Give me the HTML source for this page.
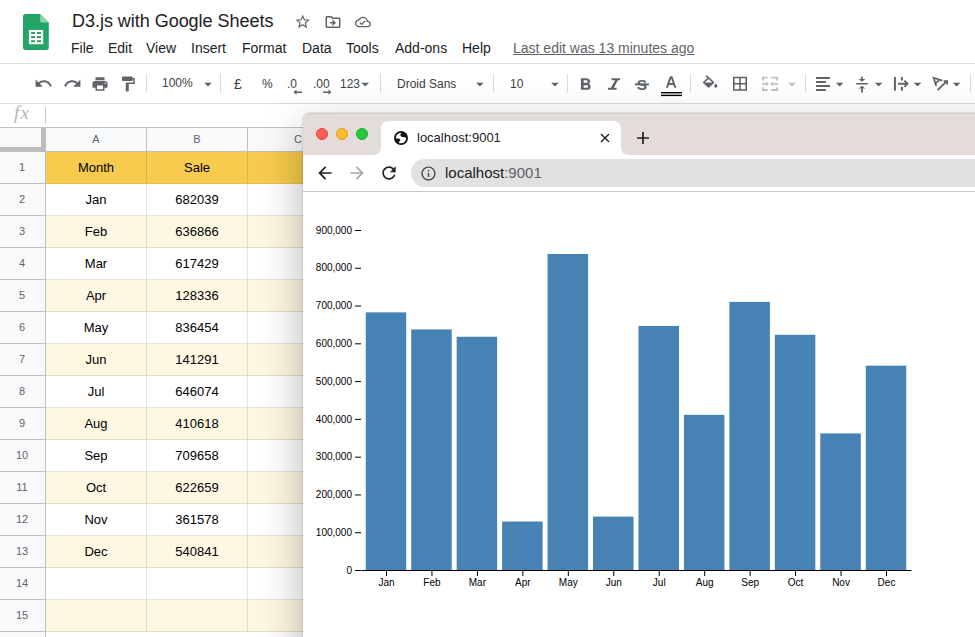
<!DOCTYPE html>
<html><head><meta charset="utf-8">
<style>
*{margin:0;padding:0;box-sizing:border-box}
html,body{width:975px;height:637px;overflow:hidden;background:#fff;font-family:"Liberation Sans",sans-serif;position:relative}
.a{position:absolute}
.t{position:absolute;white-space:nowrap}
#title{left:72px;top:11px;font-size:18px;color:#202124;letter-spacing:-0.03px}
.menu{top:40px;font-size:14px;color:#202124}
.ic{position:absolute;fill:#5f6368}
.sep{position:absolute;top:74px;width:1px;height:19px;background:#dadce0}
.tb{position:absolute;font-size:12px;color:#3c4043}
.arr{position:absolute;width:0;height:0;border-left:3.5px solid transparent;border-right:3.5px solid transparent;border-top:3.5px solid #5f6368}
#grid{position:absolute;left:0;top:127px;width:975px;height:510px}
.rh{position:absolute;left:0;width:45px;background:#f8f9fa;border-bottom:1px solid #c0c0c0;border-right:1px solid #c0c0c0;color:#5f6368;font-size:11px;text-align:center}
.cell{position:absolute;border-bottom:1px solid #e2e2e2;border-right:1px solid #e2e2e2;font-size:13px;color:#000;text-align:center}
</style></head><body>
<!-- Sheets logo -->
<svg class="a" style="left:0;top:0" width="60" height="60" viewBox="0 0 60 60">
<path d="M25.5 14H40.2L48.8 22.6V47.5A2.5 2.5 0 0 1 46.3 50H25.5A2.5 2.5 0 0 1 23 47.5V16.5A2.5 2.5 0 0 1 25.5 14Z" fill="#22a565"/>
<path d="M40.2 14L48.8 22.6H42.2A2 2 0 0 1 40.2 20.6Z" fill="#8ed1b1"/>
<rect x="28.9" y="29.9" width="14.3" height="14.3" fill="#fff"/>
<g fill="#1c9458"><rect x="31.1" y="32.1" width="3.8" height="1.8"/><rect x="37" y="32.1" width="4" height="1.8"/><rect x="31.1" y="36.2" width="3.8" height="1.8"/><rect x="37" y="36.2" width="4" height="1.8"/><rect x="31.1" y="40.3" width="3.8" height="1.8"/><rect x="37" y="40.3" width="4" height="1.8"/></g>
</svg>
<div id="title" class="t">D3.js with Google Sheets</div>
<!-- star -->
<svg class="ic" style="left:294.3px;top:13.4px" width="17.3" height="17.3" viewBox="0 0 24 24"><path d="M22 9.24l-7.19-.62L12 2 9.19 8.63 2 9.24l5.46 4.73L5.82 21 12 17.27 18.18 21l-1.63-7.03L22 9.24zM12 15.4l-3.76 2.27 1-4.28-3.32-2.88 4.38-.38L12 6.1l1.71 4.04 4.38.38-3.32 2.88 1 4.28L12 15.4z"/></svg>
<!-- folder move -->
<svg class="ic" style="left:323.5px;top:13px" width="18" height="18" viewBox="0 0 24 24"><path d="M20 6h-8l-2-2H4c-1.11 0-1.99.89-1.99 2L2 18c0 1.11.89 2 2 2h16c1.11 0 2-.89 2-2V8c0-1.11-.89-2-2-2zm0 12H4V6h5.17l2 2H20v10zm-7.84-6H8v2h4.16l-1.59 1.59L11.99 17 16 13.01 11.99 9l-1.41 1.41L12.16 12z"/></svg>
<!-- cloud done -->
<svg class="ic" style="left:355px;top:14.3px" width="16" height="16" viewBox="0 0 24 24"><path d="M19.35 10.04C18.67 6.59 15.64 4 12 4 9.11 4 6.6 5.64 5.35 8.04 2.34 8.36 0 10.91 0 14c0 3.31 2.69 6 6 6h13c2.76 0 5-2.24 5-5 0-2.64-2.05-4.78-4.65-4.96zM19 18H6c-2.21 0-4-1.79-4-4 0-2.05 1.53-3.76 3.56-3.97l1.07-.11.5-.95C8.08 7.14 9.94 6 12 6c2.62 0 4.88 1.86 5.39 4.43l.3 1.5 1.53.11c1.56.1 2.78 1.41 2.78 2.96 0 1.65-1.35 3-3 3zm-9-3.82l-2.09-2.09L6.5 13.5 10 17l6.01-6.01-1.41-1.41z"/></svg>

<div class="t menu" style="left:71px">File</div>
<div class="t menu" style="left:108px">Edit</div>
<div class="t menu" style="left:146px">View</div>
<div class="t menu" style="left:191px">Insert</div>
<div class="t menu" style="left:242px">Format</div>
<div class="t menu" style="left:302px">Data</div>
<div class="t menu" style="left:346px">Tools</div>
<div class="t menu" style="left:395px">Add-ons</div>
<div class="t menu" style="left:462px">Help</div>
<div class="t menu" style="left:513px;color:#5f6368;text-decoration:underline">Last edit was 13 minutes ago</div>

<!-- toolbar -->
<div class="a" style="left:0;top:63px;width:975px;height:1px;background:#dadce0"></div>
<div class="a" style="left:0;top:103px;width:975px;height:1px;background:#dadce0"></div>

<svg class="ic" style="left:34px;top:74px" width="19" height="19" viewBox="0 0 24 24"><path d="M12.5 8c-2.65 0-5.05.99-6.9 2.6L2 7v9h9l-3.62-3.62c1.39-1.16 3.16-1.88 5.12-1.880 3.54 0 6.55 2.31 7.6 5.5l2.37-.78C21.08 11.03 17.15 8 12.5 8z"/></svg>
<svg class="ic" style="left:63px;top:74px" width="19" height="19" viewBox="0 0 24 24"><path d="M18.4 10.6C16.55 8.99 14.15 8 11.5 8c-4.65 0-8.58 3.03-9.960 7.22L3.9 16c1.05-3.19 4.05-5.5 7.6-5.5 1.95 0 3.73.72 5.12 1.88L13 16h9V7l-3.6 3.6z"/></svg>
<svg class="ic" style="left:91px;top:75px" width="18" height="18" viewBox="0 0 24 24"><path d="M19 8H5c-1.66 0-3 1.34-3 3v6h4v4h12v-4h4v-6c0-1.66-1.34-3-3-3zm-3 11H8v-5h8v5zm3-7c-.55 0-1-.45-1-1s.45-1 1-1 1 .45 1 1-.45 1-1 1zm-1-9H6v4h12V3z"/></svg>
<svg class="ic" style="left:119px;top:75px" width="18" height="18" viewBox="0 0 24 24"><path d="M18 4V3c0-.55-.45-1-1-1H5c-.55 0-1 .45-1 1v4c0 .55.45 1 1 1h12c.55 0 1-.45 1-1V6h1v4H9v11c0 .55.45 1 1 1h2c.55 0 1-.45 1-1v-9h8V4h-3z"/></svg>
<div class="sep" style="left:146px"></div>
<div class="tb t" style="left:162px;top:76px">100%</div>
<div class="sep" style="left:220px"></div>
<div class="tb t" style="left:234px;top:76px;font-size:14px">£</div>
<div class="tb t" style="left:262px;top:77px">%</div>
<div class="tb t" style="left:287px;top:77px">.0</div>
<div class="tb t" style="left:313px;top:77px">.00</div>
<div class="tb t" style="left:340px;top:77px">123</div>
<div class="sep" style="left:380px"></div>
<div class="tb t" style="left:397px;top:77px">Droid Sans</div>
<div class="sep" style="left:493px"></div>
<div class="tb t" style="left:510px;top:77px">10</div>
<div class="sep" style="left:567px"></div>
<div class="sep" style="left:690px"></div>
<div class="sep" style="left:805px"></div>
<!--TBSVG--><svg class="a" style="left:0;top:0" width="975" height="110" viewBox="0 0 975 110"><path d="M204.2 82.8h7.6l-3.8 3.8z" fill="#5f6368"/><path d="M361.4 82.8h7.6l-3.8 3.8z" fill="#5f6368"/><path d="M476.09999999999997 82.8h7.6l-3.8 3.8z" fill="#5f6368"/><path d="M551.1 82.8h7.6l-3.8 3.8z" fill="#5f6368"/><path d="M835.9000000000001 82.8h7.6l-3.8 3.8z" fill="#5f6368"/><path d="M874.9000000000001 82.8h7.6l-3.8 3.8z" fill="#5f6368"/><path d="M913.7 82.8h7.6l-3.8 3.8z" fill="#5f6368"/><path d="M952.8000000000001 82.8h7.6l-3.8 3.8z" fill="#5f6368"/><path d="M788.2 82.8h7.6l-3.8 3.8z" fill="#bdc1c6"/><path d="M293.5 92.2l3-2.6v1.8h5.5v1.6h-5.5v1.8z" fill="#5f6368"/><path d="M331.5 92.2l-3-2.6v1.8h-5.5v1.6h5.5v1.8z" fill="#5f6368"/><g transform="translate(574.6,74.9) scale(0.902,0.829)"><path fill="#5f6368" d="M15.6 10.79c.97-.67 1.65-1.77 1.65-2.79 0-2.260-1.75-4-4-4H7v14h7.04c2.09 0 3.71-1.7 3.71-3.79 0-1.52-.86-2.82-2.15-3.42zM10 6.5h3c.83 0 1.5.67 1.5 1.5s-.67 1.5-1.5 1.5h-3v-3zm3.5 9H10v-3h3.5c.83 0 1.5.67 1.5 1.5s-.67 1.5-1.5 1.5z"/></g><path fill="#5f6368" d="M611.6 78.2h8.5v2.1h-8.5zM608 87.7h8.6v2.1h-8.6zM615.1 80.3h2.8l-4.1 7.4h-2.9z"/><text x="641.9" y="89.8" font-family="Liberation Sans" font-weight="bold" font-size="15.5" text-anchor="middle" fill="#5f6368">S</text><rect x="634.8" y="83.4" width="14.1" height="1.9" fill="#5f6368"/><path fill="#5f6368" fill-rule="evenodd" d="M665.9 87.8L669.9 76.3h2.5L676.4 87.8h-2.1l-1-2.9h-4.3l-1 2.9zM669.6 83.1h3.1l-1.55-4.5z"/><rect x="661" y="92" width="21" height="1.4" fill="#000"/><rect x="661" y="94.7" width="21" height="1.4" fill="#000"/><g transform="translate(700.6,75.1) scale(0.8,0.74)"><path fill="#5f6368" d="M16.56 8.94L7.62 0 6.21 1.41l2.38 2.38-5.15 5.15c-.59.59-.59 1.54 0 2.12l5.5 5.5c.29.29.68.44 1.06.44s.77-.15 1.06-.44l5.5-5.5c.59-.58.59-1.53 0-2.12zM5.21 10L10 5.21 14.79 10H5.21zM19 11.5s-2 2.17-2 3.5c0 1.1.9 2 2 2s2-.9 2-2c0-1.33-2-3.5-2-3.5z"/></g><g transform="translate(730.67,74.37) scale(0.778)"><path fill="#5f6368" d="M3 3v18h18V3H3zm8 16H5v-6h6v6zm0-8H5V5h6v6zm8 8h-6v-6h6v6zm0-8h-6V5h6v6z"/></g><g stroke="#bdc1c6" stroke-width="1.8" fill="none"><path d="M762.9 80.6V77.6H767.6M771.2 77.6H777.1V80.6M762.9 87.2V90H767.6M771.2 90H777.1V87.2M762 83.8H767M777.9 83.8H772"/></g><path fill="#bdc1c6" d="M766.2 81.3l2.6 2.5-2.6 2.5zM772.8 81.3l-2.6 2.5 2.6 2.5z"/><path fill="#5f6368" d="M816.1 77.1h13.8v1.8h-13.8zM816.1 81.1h9.7v1.8h-9.7zM816.1 85.1h13.8v1.8h-13.8zM816.1 89.1h9.7v1.8h-9.7z"/><path fill="#5f6368" d="M856.2 82.9h11.6v1.6h-11.6zM861.1 76.7h1.8v2.6h-1.8zM858.6 79.1h6.8l-3.4 2.6zM858.6 88.4h6.8l-3.4-2.6zM861.1 88.2h1.8v4.3h-1.8z"/><path fill="#5f6368" d="M893.9 76.9h2v13.9h-2zM900.9 76.9h2v3.5h-2zM900.9 86.7h2v4.1h-2zM898.1 82.7h8v2h-8z"/><path d="M904.4 80.6l3.1 3.1-3.1 3.1" stroke="#5f6368" stroke-width="1.9" fill="none"/><path d="M942.3 80.6L933.6 77.8L936.3 86.0M939.6 79.7L934.6 84.2" stroke="#5f6368" stroke-width="1.7" fill="none" stroke-linejoin="miter"/><path d="M937.6 90.2L946.8 81.1M943.6 81.1H947.1V84.6" stroke="#5f6368" stroke-width="1.8" fill="none"/></svg><!--/TBSVG-->
<div class="sep" style="left:970px"></div>

<!-- formula bar -->
<div class="t" style="left:14px;top:101.5px;font-family:'Liberation Serif',serif;font-style:italic;font-size:19px;color:#b5b5b5;letter-spacing:1.2px">fx</div>
<div class="a" style="left:45px;top:107px;width:1px;height:17px;background:#c6c8cb"></div>

<!-- grid -->
<div class="a" style="left:0;top:127px;width:975px;height:1px;background:#c0c0c0"></div>
<!--GRID-->
<div class="a" style="left:0;top:128px;width:46px;height:24px;background:#f8f9fa"></div>
<div class="a" style="left:41px;top:128px;width:5px;height:24px;background:#bdbdbd"></div>
<div class="a" style="left:0;top:147px;width:46px;height:5px;background:#bdbdbd"></div>
<div class="a" style="left:46px;top:128px;width:101px;height:24px;background:#f8f9fa;border-right:1px solid #c0c0c0;border-bottom:1px solid #c0c0c0;color:#5f6368;font-size:11px;text-align:center;line-height:23px">A</div>
<div class="a" style="left:147px;top:128px;width:101px;height:24px;background:#f8f9fa;border-right:1px solid #c0c0c0;border-bottom:1px solid #c0c0c0;color:#5f6368;font-size:11px;text-align:center;line-height:23px">B</div>
<div class="a" style="left:248px;top:128px;width:101px;height:24px;background:#f8f9fa;border-right:1px solid #c0c0c0;border-bottom:1px solid #c0c0c0;color:#5f6368;font-size:11px;text-align:center;line-height:23px">C</div>
<div class="a" style="left:349px;top:128px;width:101px;height:24px;background:#f8f9fa;border-right:1px solid #c0c0c0;border-bottom:1px solid #c0c0c0;color:#5f6368;font-size:11px;text-align:center;line-height:23px">D</div>
<div class="a" style="left:0;top:152px;width:46px;height:32px;background:#f8f9fa;border-right:1px solid #c0c0c0;border-bottom:1px solid #c0c0c0;color:#5f6368;font-size:11px;text-align:center;line-height:31px;padding-right:1px">1</div>
<div class="a" style="left:46px;top:152px;width:101px;height:32px;background:#f7cb4d;border-right:1px solid rgba(0,0,0,0.11);border-bottom:1px solid rgba(0,0,0,0.05);color:#000;font-size:13px;text-align:center;line-height:31px">Month</div>
<div class="a" style="left:147px;top:152px;width:101px;height:32px;background:#f7cb4d;border-right:1px solid rgba(0,0,0,0.11);border-bottom:1px solid rgba(0,0,0,0.05);color:#000;font-size:13px;text-align:center;line-height:31px">Sale</div>
<div class="a" style="left:248px;top:152px;width:101px;height:32px;background:#f7cb4d;border-right:1px solid rgba(0,0,0,0.11);border-bottom:1px solid rgba(0,0,0,0.05);color:#000;font-size:13px;text-align:center;line-height:31px"></div>
<div class="a" style="left:349px;top:152px;width:101px;height:32px;background:#f7cb4d;border-right:1px solid rgba(0,0,0,0.11);border-bottom:1px solid rgba(0,0,0,0.05);color:#000;font-size:13px;text-align:center;line-height:31px"></div>
<div class="a" style="left:0;top:184px;width:46px;height:32px;background:#f8f9fa;border-right:1px solid #c0c0c0;border-bottom:1px solid #c0c0c0;color:#5f6368;font-size:11px;text-align:center;line-height:31px;padding-right:1px">2</div>
<div class="a" style="left:46px;top:184px;width:101px;height:32px;background:#ffffff;border-right:1px solid rgba(0,0,0,0.11);border-bottom:1px solid rgba(0,0,0,0.11);color:#000;font-size:13px;text-align:center;line-height:31px">Jan</div>
<div class="a" style="left:147px;top:184px;width:101px;height:32px;background:#ffffff;border-right:1px solid rgba(0,0,0,0.11);border-bottom:1px solid rgba(0,0,0,0.11);color:#000;font-size:13px;text-align:center;line-height:31px">682039</div>
<div class="a" style="left:248px;top:184px;width:101px;height:32px;background:#ffffff;border-right:1px solid rgba(0,0,0,0.11);border-bottom:1px solid rgba(0,0,0,0.11);color:#000;font-size:13px;text-align:center;line-height:31px"></div>
<div class="a" style="left:349px;top:184px;width:101px;height:32px;background:#ffffff;border-right:1px solid rgba(0,0,0,0.11);border-bottom:1px solid rgba(0,0,0,0.11);color:#000;font-size:13px;text-align:center;line-height:31px"></div>
<div class="a" style="left:0;top:216px;width:46px;height:32px;background:#f8f9fa;border-right:1px solid #c0c0c0;border-bottom:1px solid #c0c0c0;color:#5f6368;font-size:11px;text-align:center;line-height:31px;padding-right:1px">3</div>
<div class="a" style="left:46px;top:216px;width:101px;height:32px;background:#fef8e3;border-right:1px solid rgba(0,0,0,0.11);border-bottom:1px solid rgba(0,0,0,0.11);color:#000;font-size:13px;text-align:center;line-height:31px">Feb</div>
<div class="a" style="left:147px;top:216px;width:101px;height:32px;background:#fef8e3;border-right:1px solid rgba(0,0,0,0.11);border-bottom:1px solid rgba(0,0,0,0.11);color:#000;font-size:13px;text-align:center;line-height:31px">636866</div>
<div class="a" style="left:248px;top:216px;width:101px;height:32px;background:#fef8e3;border-right:1px solid rgba(0,0,0,0.11);border-bottom:1px solid rgba(0,0,0,0.11);color:#000;font-size:13px;text-align:center;line-height:31px"></div>
<div class="a" style="left:349px;top:216px;width:101px;height:32px;background:#fef8e3;border-right:1px solid rgba(0,0,0,0.11);border-bottom:1px solid rgba(0,0,0,0.11);color:#000;font-size:13px;text-align:center;line-height:31px"></div>
<div class="a" style="left:0;top:248px;width:46px;height:32px;background:#f8f9fa;border-right:1px solid #c0c0c0;border-bottom:1px solid #c0c0c0;color:#5f6368;font-size:11px;text-align:center;line-height:31px;padding-right:1px">4</div>
<div class="a" style="left:46px;top:248px;width:101px;height:32px;background:#ffffff;border-right:1px solid rgba(0,0,0,0.11);border-bottom:1px solid rgba(0,0,0,0.11);color:#000;font-size:13px;text-align:center;line-height:31px">Mar</div>
<div class="a" style="left:147px;top:248px;width:101px;height:32px;background:#ffffff;border-right:1px solid rgba(0,0,0,0.11);border-bottom:1px solid rgba(0,0,0,0.11);color:#000;font-size:13px;text-align:center;line-height:31px">617429</div>
<div class="a" style="left:248px;top:248px;width:101px;height:32px;background:#ffffff;border-right:1px solid rgba(0,0,0,0.11);border-bottom:1px solid rgba(0,0,0,0.11);color:#000;font-size:13px;text-align:center;line-height:31px"></div>
<div class="a" style="left:349px;top:248px;width:101px;height:32px;background:#ffffff;border-right:1px solid rgba(0,0,0,0.11);border-bottom:1px solid rgba(0,0,0,0.11);color:#000;font-size:13px;text-align:center;line-height:31px"></div>
<div class="a" style="left:0;top:280px;width:46px;height:32px;background:#f8f9fa;border-right:1px solid #c0c0c0;border-bottom:1px solid #c0c0c0;color:#5f6368;font-size:11px;text-align:center;line-height:31px;padding-right:1px">5</div>
<div class="a" style="left:46px;top:280px;width:101px;height:32px;background:#fef8e3;border-right:1px solid rgba(0,0,0,0.11);border-bottom:1px solid rgba(0,0,0,0.11);color:#000;font-size:13px;text-align:center;line-height:31px">Apr</div>
<div class="a" style="left:147px;top:280px;width:101px;height:32px;background:#fef8e3;border-right:1px solid rgba(0,0,0,0.11);border-bottom:1px solid rgba(0,0,0,0.11);color:#000;font-size:13px;text-align:center;line-height:31px">128336</div>
<div class="a" style="left:248px;top:280px;width:101px;height:32px;background:#fef8e3;border-right:1px solid rgba(0,0,0,0.11);border-bottom:1px solid rgba(0,0,0,0.11);color:#000;font-size:13px;text-align:center;line-height:31px"></div>
<div class="a" style="left:349px;top:280px;width:101px;height:32px;background:#fef8e3;border-right:1px solid rgba(0,0,0,0.11);border-bottom:1px solid rgba(0,0,0,0.11);color:#000;font-size:13px;text-align:center;line-height:31px"></div>
<div class="a" style="left:0;top:312px;width:46px;height:32px;background:#f8f9fa;border-right:1px solid #c0c0c0;border-bottom:1px solid #c0c0c0;color:#5f6368;font-size:11px;text-align:center;line-height:31px;padding-right:1px">6</div>
<div class="a" style="left:46px;top:312px;width:101px;height:32px;background:#ffffff;border-right:1px solid rgba(0,0,0,0.11);border-bottom:1px solid rgba(0,0,0,0.11);color:#000;font-size:13px;text-align:center;line-height:31px">May</div>
<div class="a" style="left:147px;top:312px;width:101px;height:32px;background:#ffffff;border-right:1px solid rgba(0,0,0,0.11);border-bottom:1px solid rgba(0,0,0,0.11);color:#000;font-size:13px;text-align:center;line-height:31px">836454</div>
<div class="a" style="left:248px;top:312px;width:101px;height:32px;background:#ffffff;border-right:1px solid rgba(0,0,0,0.11);border-bottom:1px solid rgba(0,0,0,0.11);color:#000;font-size:13px;text-align:center;line-height:31px"></div>
<div class="a" style="left:349px;top:312px;width:101px;height:32px;background:#ffffff;border-right:1px solid rgba(0,0,0,0.11);border-bottom:1px solid rgba(0,0,0,0.11);color:#000;font-size:13px;text-align:center;line-height:31px"></div>
<div class="a" style="left:0;top:344px;width:46px;height:32px;background:#f8f9fa;border-right:1px solid #c0c0c0;border-bottom:1px solid #c0c0c0;color:#5f6368;font-size:11px;text-align:center;line-height:31px;padding-right:1px">7</div>
<div class="a" style="left:46px;top:344px;width:101px;height:32px;background:#fef8e3;border-right:1px solid rgba(0,0,0,0.11);border-bottom:1px solid rgba(0,0,0,0.11);color:#000;font-size:13px;text-align:center;line-height:31px">Jun</div>
<div class="a" style="left:147px;top:344px;width:101px;height:32px;background:#fef8e3;border-right:1px solid rgba(0,0,0,0.11);border-bottom:1px solid rgba(0,0,0,0.11);color:#000;font-size:13px;text-align:center;line-height:31px">141291</div>
<div class="a" style="left:248px;top:344px;width:101px;height:32px;background:#fef8e3;border-right:1px solid rgba(0,0,0,0.11);border-bottom:1px solid rgba(0,0,0,0.11);color:#000;font-size:13px;text-align:center;line-height:31px"></div>
<div class="a" style="left:349px;top:344px;width:101px;height:32px;background:#fef8e3;border-right:1px solid rgba(0,0,0,0.11);border-bottom:1px solid rgba(0,0,0,0.11);color:#000;font-size:13px;text-align:center;line-height:31px"></div>
<div class="a" style="left:0;top:376px;width:46px;height:32px;background:#f8f9fa;border-right:1px solid #c0c0c0;border-bottom:1px solid #c0c0c0;color:#5f6368;font-size:11px;text-align:center;line-height:31px;padding-right:1px">8</div>
<div class="a" style="left:46px;top:376px;width:101px;height:32px;background:#ffffff;border-right:1px solid rgba(0,0,0,0.11);border-bottom:1px solid rgba(0,0,0,0.11);color:#000;font-size:13px;text-align:center;line-height:31px">Jul</div>
<div class="a" style="left:147px;top:376px;width:101px;height:32px;background:#ffffff;border-right:1px solid rgba(0,0,0,0.11);border-bottom:1px solid rgba(0,0,0,0.11);color:#000;font-size:13px;text-align:center;line-height:31px">646074</div>
<div class="a" style="left:248px;top:376px;width:101px;height:32px;background:#ffffff;border-right:1px solid rgba(0,0,0,0.11);border-bottom:1px solid rgba(0,0,0,0.11);color:#000;font-size:13px;text-align:center;line-height:31px"></div>
<div class="a" style="left:349px;top:376px;width:101px;height:32px;background:#ffffff;border-right:1px solid rgba(0,0,0,0.11);border-bottom:1px solid rgba(0,0,0,0.11);color:#000;font-size:13px;text-align:center;line-height:31px"></div>
<div class="a" style="left:0;top:408px;width:46px;height:32px;background:#f8f9fa;border-right:1px solid #c0c0c0;border-bottom:1px solid #c0c0c0;color:#5f6368;font-size:11px;text-align:center;line-height:31px;padding-right:1px">9</div>
<div class="a" style="left:46px;top:408px;width:101px;height:32px;background:#fef8e3;border-right:1px solid rgba(0,0,0,0.11);border-bottom:1px solid rgba(0,0,0,0.11);color:#000;font-size:13px;text-align:center;line-height:31px">Aug</div>
<div class="a" style="left:147px;top:408px;width:101px;height:32px;background:#fef8e3;border-right:1px solid rgba(0,0,0,0.11);border-bottom:1px solid rgba(0,0,0,0.11);color:#000;font-size:13px;text-align:center;line-height:31px">410618</div>
<div class="a" style="left:248px;top:408px;width:101px;height:32px;background:#fef8e3;border-right:1px solid rgba(0,0,0,0.11);border-bottom:1px solid rgba(0,0,0,0.11);color:#000;font-size:13px;text-align:center;line-height:31px"></div>
<div class="a" style="left:349px;top:408px;width:101px;height:32px;background:#fef8e3;border-right:1px solid rgba(0,0,0,0.11);border-bottom:1px solid rgba(0,0,0,0.11);color:#000;font-size:13px;text-align:center;line-height:31px"></div>
<div class="a" style="left:0;top:440px;width:46px;height:32px;background:#f8f9fa;border-right:1px solid #c0c0c0;border-bottom:1px solid #c0c0c0;color:#5f6368;font-size:11px;text-align:center;line-height:31px;padding-right:1px">10</div>
<div class="a" style="left:46px;top:440px;width:101px;height:32px;background:#ffffff;border-right:1px solid rgba(0,0,0,0.11);border-bottom:1px solid rgba(0,0,0,0.11);color:#000;font-size:13px;text-align:center;line-height:31px">Sep</div>
<div class="a" style="left:147px;top:440px;width:101px;height:32px;background:#ffffff;border-right:1px solid rgba(0,0,0,0.11);border-bottom:1px solid rgba(0,0,0,0.11);color:#000;font-size:13px;text-align:center;line-height:31px">709658</div>
<div class="a" style="left:248px;top:440px;width:101px;height:32px;background:#ffffff;border-right:1px solid rgba(0,0,0,0.11);border-bottom:1px solid rgba(0,0,0,0.11);color:#000;font-size:13px;text-align:center;line-height:31px"></div>
<div class="a" style="left:349px;top:440px;width:101px;height:32px;background:#ffffff;border-right:1px solid rgba(0,0,0,0.11);border-bottom:1px solid rgba(0,0,0,0.11);color:#000;font-size:13px;text-align:center;line-height:31px"></div>
<div class="a" style="left:0;top:472px;width:46px;height:32px;background:#f8f9fa;border-right:1px solid #c0c0c0;border-bottom:1px solid #c0c0c0;color:#5f6368;font-size:11px;text-align:center;line-height:31px;padding-right:1px">11</div>
<div class="a" style="left:46px;top:472px;width:101px;height:32px;background:#fef8e3;border-right:1px solid rgba(0,0,0,0.11);border-bottom:1px solid rgba(0,0,0,0.11);color:#000;font-size:13px;text-align:center;line-height:31px">Oct</div>
<div class="a" style="left:147px;top:472px;width:101px;height:32px;background:#fef8e3;border-right:1px solid rgba(0,0,0,0.11);border-bottom:1px solid rgba(0,0,0,0.11);color:#000;font-size:13px;text-align:center;line-height:31px">622659</div>
<div class="a" style="left:248px;top:472px;width:101px;height:32px;background:#fef8e3;border-right:1px solid rgba(0,0,0,0.11);border-bottom:1px solid rgba(0,0,0,0.11);color:#000;font-size:13px;text-align:center;line-height:31px"></div>
<div class="a" style="left:349px;top:472px;width:101px;height:32px;background:#fef8e3;border-right:1px solid rgba(0,0,0,0.11);border-bottom:1px solid rgba(0,0,0,0.11);color:#000;font-size:13px;text-align:center;line-height:31px"></div>
<div class="a" style="left:0;top:504px;width:46px;height:32px;background:#f8f9fa;border-right:1px solid #c0c0c0;border-bottom:1px solid #c0c0c0;color:#5f6368;font-size:11px;text-align:center;line-height:31px;padding-right:1px">12</div>
<div class="a" style="left:46px;top:504px;width:101px;height:32px;background:#ffffff;border-right:1px solid rgba(0,0,0,0.11);border-bottom:1px solid rgba(0,0,0,0.11);color:#000;font-size:13px;text-align:center;line-height:31px">Nov</div>
<div class="a" style="left:147px;top:504px;width:101px;height:32px;background:#ffffff;border-right:1px solid rgba(0,0,0,0.11);border-bottom:1px solid rgba(0,0,0,0.11);color:#000;font-size:13px;text-align:center;line-height:31px">361578</div>
<div class="a" style="left:248px;top:504px;width:101px;height:32px;background:#ffffff;border-right:1px solid rgba(0,0,0,0.11);border-bottom:1px solid rgba(0,0,0,0.11);color:#000;font-size:13px;text-align:center;line-height:31px"></div>
<div class="a" style="left:349px;top:504px;width:101px;height:32px;background:#ffffff;border-right:1px solid rgba(0,0,0,0.11);border-bottom:1px solid rgba(0,0,0,0.11);color:#000;font-size:13px;text-align:center;line-height:31px"></div>
<div class="a" style="left:0;top:536px;width:46px;height:32px;background:#f8f9fa;border-right:1px solid #c0c0c0;border-bottom:1px solid #c0c0c0;color:#5f6368;font-size:11px;text-align:center;line-height:31px;padding-right:1px">13</div>
<div class="a" style="left:46px;top:536px;width:101px;height:32px;background:#fef8e3;border-right:1px solid rgba(0,0,0,0.11);border-bottom:1px solid rgba(0,0,0,0.11);color:#000;font-size:13px;text-align:center;line-height:31px">Dec</div>
<div class="a" style="left:147px;top:536px;width:101px;height:32px;background:#fef8e3;border-right:1px solid rgba(0,0,0,0.11);border-bottom:1px solid rgba(0,0,0,0.11);color:#000;font-size:13px;text-align:center;line-height:31px">540841</div>
<div class="a" style="left:248px;top:536px;width:101px;height:32px;background:#fef8e3;border-right:1px solid rgba(0,0,0,0.11);border-bottom:1px solid rgba(0,0,0,0.11);color:#000;font-size:13px;text-align:center;line-height:31px"></div>
<div class="a" style="left:349px;top:536px;width:101px;height:32px;background:#fef8e3;border-right:1px solid rgba(0,0,0,0.11);border-bottom:1px solid rgba(0,0,0,0.11);color:#000;font-size:13px;text-align:center;line-height:31px"></div>
<div class="a" style="left:0;top:568px;width:46px;height:32px;background:#f8f9fa;border-right:1px solid #c0c0c0;border-bottom:1px solid #c0c0c0;color:#5f6368;font-size:11px;text-align:center;line-height:31px;padding-right:1px">14</div>
<div class="a" style="left:46px;top:568px;width:101px;height:32px;background:#ffffff;border-right:1px solid rgba(0,0,0,0.11);border-bottom:1px solid rgba(0,0,0,0.11);color:#000;font-size:13px;text-align:center;line-height:31px"></div>
<div class="a" style="left:147px;top:568px;width:101px;height:32px;background:#ffffff;border-right:1px solid rgba(0,0,0,0.11);border-bottom:1px solid rgba(0,0,0,0.11);color:#000;font-size:13px;text-align:center;line-height:31px"></div>
<div class="a" style="left:248px;top:568px;width:101px;height:32px;background:#ffffff;border-right:1px solid rgba(0,0,0,0.11);border-bottom:1px solid rgba(0,0,0,0.11);color:#000;font-size:13px;text-align:center;line-height:31px"></div>
<div class="a" style="left:349px;top:568px;width:101px;height:32px;background:#ffffff;border-right:1px solid rgba(0,0,0,0.11);border-bottom:1px solid rgba(0,0,0,0.11);color:#000;font-size:13px;text-align:center;line-height:31px"></div>
<div class="a" style="left:0;top:600px;width:46px;height:32px;background:#f8f9fa;border-right:1px solid #c0c0c0;border-bottom:1px solid #c0c0c0;color:#5f6368;font-size:11px;text-align:center;line-height:31px;padding-right:1px">15</div>
<div class="a" style="left:46px;top:600px;width:101px;height:32px;background:#fef8e3;border-right:1px solid rgba(0,0,0,0.11);border-bottom:1px solid rgba(0,0,0,0.11);color:#000;font-size:13px;text-align:center;line-height:31px"></div>
<div class="a" style="left:147px;top:600px;width:101px;height:32px;background:#fef8e3;border-right:1px solid rgba(0,0,0,0.11);border-bottom:1px solid rgba(0,0,0,0.11);color:#000;font-size:13px;text-align:center;line-height:31px"></div>
<div class="a" style="left:248px;top:600px;width:101px;height:32px;background:#fef8e3;border-right:1px solid rgba(0,0,0,0.11);border-bottom:1px solid rgba(0,0,0,0.11);color:#000;font-size:13px;text-align:center;line-height:31px"></div>
<div class="a" style="left:349px;top:600px;width:101px;height:32px;background:#fef8e3;border-right:1px solid rgba(0,0,0,0.11);border-bottom:1px solid rgba(0,0,0,0.11);color:#000;font-size:13px;text-align:center;line-height:31px"></div>
<div class="a" style="left:0;top:632px;width:46px;height:32px;background:#f8f9fa;border-right:1px solid #c0c0c0"></div>
<!--/GRID-->
<!--BROWSER-->
<div class="a" style="left:303px;top:113px;width:720px;height:560px;border-radius:6px 6px 0 0;background:#fff;box-shadow:0 0 0 0.5px rgba(0,0,0,0.15),0 16px 44px rgba(0,0,0,0.3)"></div>
<div class="a" style="left:303px;top:113px;width:720px;height:42px;border-radius:6px 6px 0 0;background:#e3dcd9;border-top:1px solid #d6d0cd"></div>
<div class="a" style="left:316px;top:128px;width:12px;height:12px;border-radius:50%;background:#fe5f57;border:0.5px solid #e0443e"></div>
<div class="a" style="left:336px;top:128px;width:12px;height:12px;border-radius:50%;background:#febc2e;border:0.5px solid #dea123"></div>
<div class="a" style="left:356px;top:128px;width:12px;height:12px;border-radius:50%;background:#28c840;border:0.5px solid #1aab29"></div>
<!-- tab -->
<svg class="a" style="left:373px;top:121px" width="258" height="34" viewBox="0 0 258 34"><path d="M0 34 Q8 34 8 26 V8 Q8 0 16 0 H240 Q248 0 248 8 V26 Q248 34 256 34 Z" fill="#fff"/></svg>
<svg class="a" style="left:393px;top:130px" width="16" height="16" viewBox="0 0 16 16"><defs><clipPath id="gc"><circle cx="8" cy="8" r="6"/></clipPath></defs><circle cx="8" cy="8" r="7" fill="#111"/><circle cx="8" cy="8" r="5.2" fill="#fff"/><g clip-path="url(#gc)" fill="#111"><path d="M9.3 1.5C8 3 7.2 4.6 7.4 5.5C8 6.8 9.5 7 10.1 7.1C11 7.3 12.7 7.4 14.2 8.6L15 1Z"/><path d="M1 8.6C3 8.4 5 8.4 5.9 8.6C7.2 9.2 7.6 10 7.4 10.2C6.6 11 5.7 12 5.5 15L1 15Z"/></g></svg>
<div class="t" style="left:417px;top:130px;font-size:13px;color:#202124">localhost:9001</div>
<svg class="a" style="left:600px;top:133px" width="10" height="10" viewBox="0 0 10 10"><path d="M1 1L9 9M9 1L1 9" stroke="#202124" stroke-width="1.4"/></svg>
<svg class="a" style="left:636px;top:131px" width="14" height="14" viewBox="0 0 14 14"><path d="M7 1V13M1 7H13" stroke="#202124" stroke-width="1.7"/></svg>
<!-- toolbar -->
<svg class="a" style="left:315px;top:163px" width="20" height="20" viewBox="0 0 24 24"><path d="M20 11H7.83l5.59-5.59L12 4l-8 8 8 8 1.41-1.41L7.83 13H20v-2z" fill="#202124"/></svg>
<svg class="a" style="left:347px;top:163px" width="20" height="20" viewBox="0 0 24 24"><path d="M12 4l-1.41 1.41L16.17 11H4v2h12.17l-5.58 5.59L12 20l8-8z" fill="#a6a6a6"/></svg>
<svg class="a" style="left:379px;top:163px" width="20" height="20" viewBox="0 0 24 24"><path d="M17.65 6.35C16.2 4.9 14.21 4 12 4c-4.42 0-7.99 3.58-7.99 8s3.57 8 7.99 8c3.73 0 6.84-2.55 7.73-6h-2.08c-.82 2.33-3.04 4-5.65 4-3.31 0-6-2.69-6-6s2.69-6 6-6c1.66 0 3.14.69 4.22 1.78L13 11h7V4l-2.35 2.35z" fill="#202124"/></svg>
<div class="a" style="left:411px;top:159px;width:620px;height:28px;border-radius:14px;background:#e1e1e1"></div>
<svg class="a" style="left:420px;top:165px" width="17" height="17" viewBox="0 0 24 24"><path d="M11 7h2v2h-2zm0 4h2v6h-2zm1-9C6.48 2 2 6.48 2 12s4.48 10 10 10 10-4.48 10-10S17.52 2 12 2zm0 18c-4.41 0-8-3.59-8-8s3.59-8 8-8 8 3.59 8 8-3.59 8-8 8z" fill="#45484c"/></svg>
<div class="t" style="left:445px;top:164px;font-size:15px;color:#202124">localhost<span style="color:#5f6368">:9001</span></div>
<div class="a" style="left:303px;top:191px;width:700px;height:1px;background:#c9c9c9"></div>
<svg class="a" style="left:0;top:0" width="975" height="637" viewBox="0 0 975 637">
<g transform="translate(361,230)" font-family="Liberation Sans, sans-serif" font-size="10">
<rect x="4.75" y="82.34" width="40.50" height="257.66" fill="steelblue"/>
<rect x="50.20" y="99.41" width="40.50" height="240.59" fill="steelblue"/>
<rect x="95.66" y="106.75" width="40.50" height="233.25" fill="steelblue"/>
<rect x="141.11" y="291.52" width="40.50" height="48.48" fill="steelblue"/>
<rect x="186.57" y="24.01" width="40.50" height="315.99" fill="steelblue"/>
<rect x="232.02" y="286.62" width="40.50" height="53.38" fill="steelblue"/>
<rect x="277.48" y="95.93" width="40.50" height="244.07" fill="steelblue"/>
<rect x="322.93" y="184.88" width="40.50" height="155.12" fill="steelblue"/>
<rect x="368.39" y="71.91" width="40.50" height="268.09" fill="steelblue"/>
<rect x="413.84" y="104.77" width="40.50" height="235.23" fill="steelblue"/>
<rect x="459.30" y="203.40" width="40.50" height="136.60" fill="steelblue"/>
<rect x="504.75" y="135.68" width="40.50" height="204.32" fill="steelblue"/>
<line x1="-6" x2="0" y1="340.50" y2="340.50" stroke="#000"/>
<text x="-9" y="340.50" dy="0.32em" text-anchor="end" fill="#000">0</text>
<line x1="-6" x2="0" y1="302.72" y2="302.72" stroke="#000"/>
<text x="-9" y="302.72" dy="0.32em" text-anchor="end" fill="#000">100,000</text>
<line x1="-6" x2="0" y1="264.94" y2="264.94" stroke="#000"/>
<text x="-9" y="264.94" dy="0.32em" text-anchor="end" fill="#000">200,000</text>
<line x1="-6" x2="0" y1="227.17" y2="227.17" stroke="#000"/>
<text x="-9" y="227.17" dy="0.32em" text-anchor="end" fill="#000">300,000</text>
<line x1="-6" x2="0" y1="189.39" y2="189.39" stroke="#000"/>
<text x="-9" y="189.39" dy="0.32em" text-anchor="end" fill="#000">400,000</text>
<line x1="-6" x2="0" y1="151.61" y2="151.61" stroke="#000"/>
<text x="-9" y="151.61" dy="0.32em" text-anchor="end" fill="#000">500,000</text>
<line x1="-6" x2="0" y1="113.83" y2="113.83" stroke="#000"/>
<text x="-9" y="113.83" dy="0.32em" text-anchor="end" fill="#000">600,000</text>
<line x1="-6" x2="0" y1="76.06" y2="76.06" stroke="#000"/>
<text x="-9" y="76.06" dy="0.32em" text-anchor="end" fill="#000">700,000</text>
<line x1="-6" x2="0" y1="38.28" y2="38.28" stroke="#000"/>
<text x="-9" y="38.28" dy="0.32em" text-anchor="end" fill="#000">800,000</text>
<line x1="-6" x2="0" y1="0.50" y2="0.50" stroke="#000"/>
<text x="-9" y="0.50" dy="0.32em" text-anchor="end" fill="#000">900,000</text>
<path d="M0.5,340.5H550.5" stroke="#000" fill="none"/>
<line x1="25.50" x2="25.50" y1="340" y2="346" stroke="#000"/>
<text x="25.50" y="349" dy="0.71em" text-anchor="middle" fill="#000">Jan</text>
<line x1="70.95" x2="70.95" y1="340" y2="346" stroke="#000"/>
<text x="70.95" y="349" dy="0.71em" text-anchor="middle" fill="#000">Feb</text>
<line x1="116.41" x2="116.41" y1="340" y2="346" stroke="#000"/>
<text x="116.41" y="349" dy="0.71em" text-anchor="middle" fill="#000">Mar</text>
<line x1="161.86" x2="161.86" y1="340" y2="346" stroke="#000"/>
<text x="161.86" y="349" dy="0.71em" text-anchor="middle" fill="#000">Apr</text>
<line x1="207.32" x2="207.32" y1="340" y2="346" stroke="#000"/>
<text x="207.32" y="349" dy="0.71em" text-anchor="middle" fill="#000">May</text>
<line x1="252.77" x2="252.77" y1="340" y2="346" stroke="#000"/>
<text x="252.77" y="349" dy="0.71em" text-anchor="middle" fill="#000">Jun</text>
<line x1="298.23" x2="298.23" y1="340" y2="346" stroke="#000"/>
<text x="298.23" y="349" dy="0.71em" text-anchor="middle" fill="#000">Jul</text>
<line x1="343.68" x2="343.68" y1="340" y2="346" stroke="#000"/>
<text x="343.68" y="349" dy="0.71em" text-anchor="middle" fill="#000">Aug</text>
<line x1="389.14" x2="389.14" y1="340" y2="346" stroke="#000"/>
<text x="389.14" y="349" dy="0.71em" text-anchor="middle" fill="#000">Sep</text>
<line x1="434.59" x2="434.59" y1="340" y2="346" stroke="#000"/>
<text x="434.59" y="349" dy="0.71em" text-anchor="middle" fill="#000">Oct</text>
<line x1="480.05" x2="480.05" y1="340" y2="346" stroke="#000"/>
<text x="480.05" y="349" dy="0.71em" text-anchor="middle" fill="#000">Nov</text>
<line x1="525.50" x2="525.50" y1="340" y2="346" stroke="#000"/>
<text x="525.50" y="349" dy="0.71em" text-anchor="middle" fill="#000">Dec</text>
</g></svg>
<!--/BROWSER-->

</body></html>
